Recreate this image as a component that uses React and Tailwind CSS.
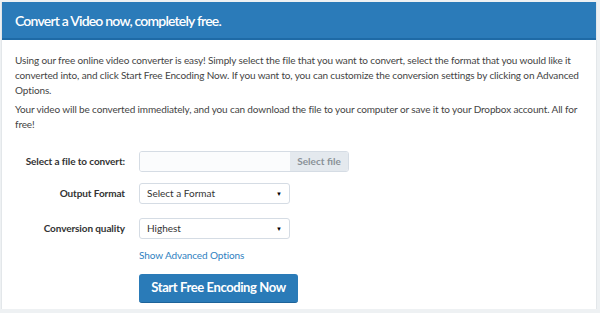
import React from 'react';

const Field = ({ label, className, children }) => (
  <div className={`flex items-center ${className}`}>
    <label className="w-[123px] text-right text-[10px] tracking-[-0.1px] font-bold text-[#333]">{label}</label>
    <div className="ml-[14px]">{children}</div>
  </div>
);

const Select = ({ value }) => (
  <div className="w-[151px] h-[21px] border border-[#d5dce4] rounded-[3px] bg-white flex items-center justify-between px-[7px] text-[10px] text-[#333]">
    <span>{value}</span>
    <span className="text-[6px] text-black">▼</span>
  </div>
);

const App = () => {
  return (
    <div className="w-[600px] h-[313px] bg-[#eef1f3] pt-[2px] pl-[1px] font-['Lato','Open_Sans',sans-serif]">
      <div className="w-[596px] h-[307px] bg-white border-l border-r border-[#e3e7ea]">
        <div className="h-[38px] bg-[#2b7bb9] border-b-2 border-[#1e6aa6] flex items-center pl-[13px]">
          <h1 className="text-[14px] font-semibold text-white tracking-[-0.8px]">Convert a Video now, completely free.</h1>
        </div>

        <div className="px-[13px] pt-[13px] text-[10px] leading-[15px] tracking-[-0.13px] text-[#444]">
          <p>
            Using our free online video converter is easy! Simply select the file that you want to convert, select the format that you would like it
            converted into, and click Start Free Encoding Now. If you want to, you can customize the conversion settings by clicking on Advanced
            Options.
          </p>
          <p className="mt-[4px]">
            Your video will be converted immediately, and you can download the file to your computer or save it to your Dropbox account. All for
            free!
          </p>
        </div>

        <Field label="Select a file to convert:" className="mt-[19px]">
          <div className="w-[210px] h-[21px] border border-[#d5dce4] rounded-[3px] flex overflow-hidden">
            <div className="flex-1 bg-[#fbfcfd]" />
            <div className="w-[58px] bg-[#e4e9ee] flex items-center justify-center text-[10px] font-bold text-[#8a9198]">
              Select file
            </div>
          </div>
        </Field>
        <Field label="Output Format" className="mt-[11px]">
          <Select value="Select a Format" />
        </Field>
        <Field label="Conversion quality" className="mt-[14px]">
          <Select value="Highest" />
        </Field>

        <div className="ml-[137px] mt-[2px]">
          <a className="text-[10px] tracking-[-0.1px] text-[#2f7fbf]">Show Advanced Options</a>
          <button className="mt-[9px] block w-[159px] h-[29px] rounded-[3px] bg-[#2a7bb8] border-b border-[#1d6399] text-white text-[13px] tracking-[-0.4px] font-bold">
            Start Free Encoding Now
          </button>
        </div>
      </div>
    </div>
  );
};

export default App;
